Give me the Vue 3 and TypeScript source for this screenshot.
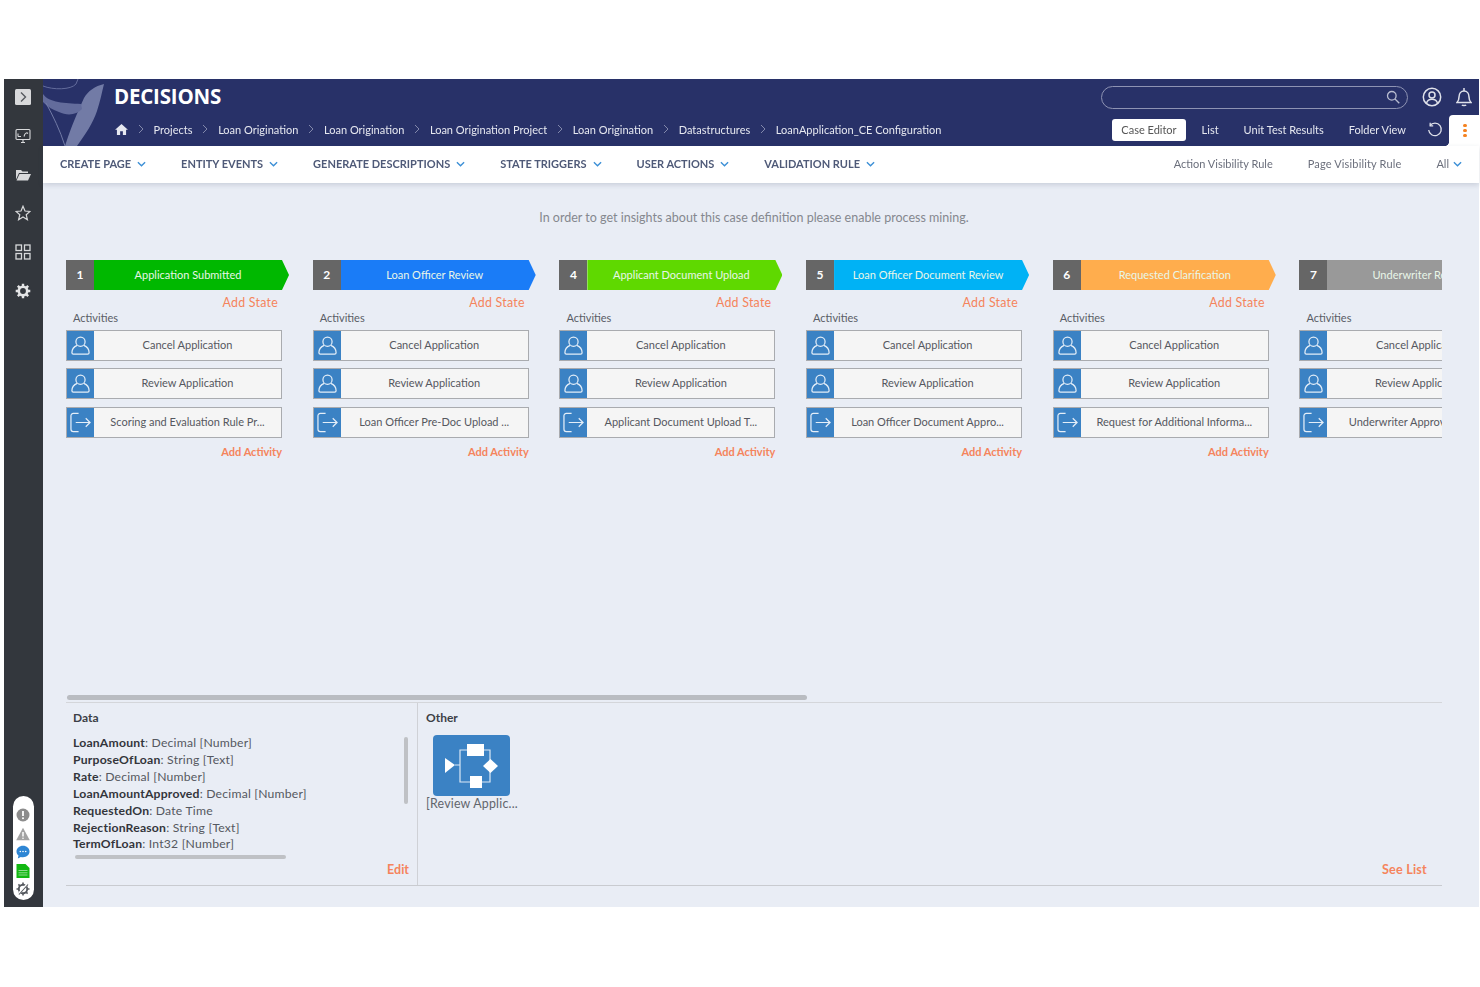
<script setup lang="ts">
type Activity = { icon: 'user' | 'exit'; label: string }
type State = { num: number; label: string; color: string; last?: boolean; activities: string[] }

const breadcrumbs = [
  'Projects',
  'Loan Origination',
  'Loan Origination',
  'Loan Origination Project',
  'Loan Origination',
  'Datastructures',
  'LoanApplication_CE Configuration'
]

const menus = ['CREATE PAGE', 'ENTITY EVENTS', 'GENERATE DESCRIPTIONS', 'STATE TRIGGERS', 'USER ACTIONS', 'VALIDATION RULE']

const states: State[] = [
  { num: 1, label: 'Application Submitted', color: '#00b800', activities: ['Cancel Application', 'Review Application', 'Scoring and Evaluation Rule Pr...'] },
  { num: 2, label: 'Loan Officer Review', color: '#1a7cf7', activities: ['Cancel Application', 'Review Application', 'Loan Officer Pre-Doc Upload ...'] },
  { num: 4, label: 'Applicant Document Upload', color: '#5fd900', activities: ['Cancel Application', 'Review Application', 'Applicant Document Upload T...'] },
  { num: 5, label: 'Loan Officer Document Review', color: '#00b2f5', activities: ['Cancel Application', 'Review Application', 'Loan Officer Document Appro...'] },
  { num: 6, label: 'Requested Clarification', color: '#ffad4d', activities: ['Cancel Application', 'Review Application', 'Request for Additional Informa...'] },
  { num: 7, label: 'Underwriter Review', color: '#999999', last: true, activities: ['Cancel Application', 'Review Application', 'Underwriter Approval Process'] }
]

const activitiesOf = (s: State): Activity[] =>
  s.activities.map((label, i) => ({ label, icon: i === 2 ? 'exit' : 'user' }))

const fields = [
  ['LoanAmount', 'Decimal [Number]'],
  ['PurposeOfLoan', 'String [Text]'],
  ['Rate', 'Decimal [Number]'],
  ['LoanAmountApproved', 'Decimal [Number]'],
  ['RequestedOn', 'Date Time'],
  ['RejectionReason', 'String [Text]'],
  ['TermOfLoan', 'Int32 [Number]']
]
</script>

<template>
  <div class="page">
    <div class="shell">
      <aside class="rail">
        <div class="rail__top">
          <svg class="rail__icon" viewBox="0 0 16 16">
            <rect width="16" height="16" rx="1.5" fill="#d8d9db" />
            <path d="M6 3.500 10.500 8 6 12.500" fill="none" stroke="#55595f" stroke-width="1.400" />
          </svg>
          <svg class="rail__icon" viewBox="0 0 16 16" fill="none" stroke="#d8d9db" stroke-width="1.100">
            <rect x="1" y="1.500" width="14" height="10" rx="1" />
            <path d="M3 8.500V5.500M3 8.500h3M9 8.500c1-4 3-4 4-3M6 14.500h4M8 11.500v3" />
          </svg>
          <svg class="rail__icon" viewBox="0 0 16 16">
            <path d="M1 3h5l1.500 1.500H13V6H4L1 12.500Z" fill="#d8d9db" />
            <path d="M4.500 7H16l-3 6.500H1.500Z" fill="#d8d9db" />
          </svg>
          <svg class="rail__icon" viewBox="0 0 16 16" fill="none" stroke="#d8d9db" stroke-width="1.200">
            <path d="M8 1.200 10 6l5 .4-3.800 3.300 1.200 5L8 12l-4.400 2.700 1.200-5L1 6.400 6 6Z" />
          </svg>
          <svg class="rail__icon" viewBox="0 0 16 16" fill="none" stroke="#d8d9db" stroke-width="1.300">
            <rect x="1" y="1" width="5.500" height="5.500" />
            <rect x="9.500" y="1" width="5.500" height="5.500" />
            <rect x="1" y="9.500" width="5.500" height="5.500" />
            <rect x="9.500" y="9.500" width="5.500" height="5.500" />
          </svg>
          <svg class="rail__icon" viewBox="0 0 16 16">
            <circle cx="8" cy="8" r="4.200" fill="none" stroke="#e4e5e6" stroke-width="2.600" />
            <path d="M8 .7v3M8 12.300v3M.7 8h3M12.300 8h3M2.800 2.800l2.100 2.100M11.100 11.100l2.100 2.100M2.800 13.200l2.100-2.100M11.100 4.900l2.100-2.100" stroke="#e4e5e6" stroke-width="2.400" />
          </svg>
        </div>
        <div class="rail__pill">
          <svg class="pill__icon" viewBox="0 0 14 14">
            <circle cx="7" cy="7" r="6.500" fill="#8c8c8c" />
            <path d="M7 3v5" stroke="#fff" stroke-width="1.800" />
            <circle cx="7" cy="10.300" r="1" fill="#fff" />
          </svg>
          <svg class="pill__icon" viewBox="0 0 14 14">
            <path d="M7 .8 13.800 13.200H.2Z" fill="#a3a3a3" />
            <path d="M7 5v4.500" stroke="#fff" stroke-width="1.500" />
            <circle cx="7" cy="11.200" r=".8" fill="#fff" />
          </svg>
          <svg class="pill__icon" viewBox="0 0 14 14">
            <path d="M7 .8c3.700 0 6.500 2.500 6.500 5.700S10.700 12.200 7 12.200c-.8 0-1.500-.1-2.200-.3L1.800 13.400l.7-2.800C1.200 9.500.5 8.100.5 6.500.5 3.300 3.300.8 7 .8Z" fill="#2e86d4" />
            <circle cx="4.300" cy="6.500" r=".8" fill="#fff" />
            <circle cx="7" cy="6.500" r=".8" fill="#fff" />
            <circle cx="9.700" cy="6.500" r=".8" fill="#fff" />
          </svg>
          <svg class="pill__icon" viewBox="0 0 14 14">
            <path d="M.5 0H9.500L13.500 4V14H.5Z" fill="#12b812" />
            <path d="M2.500 6.500h9M2.500 8.800h9M2.500 11h9" stroke="#8fdc8f" stroke-width="1" />
          </svg>
          <svg class="pill__icon" viewBox="0 0 14 14">
            <circle cx="7" cy="7" r="4.200" fill="none" stroke="#55595f" stroke-width="1.900" />
            <path d="M7 .5v2.500M7 11v2.500M.5 7H3M11 7h2.500M2.400 2.400l1.800 1.800M9.800 9.800l1.800 1.800M2.400 11.600l1.800-1.800M9.800 4.200l1.800-1.800" stroke="#55595f" stroke-width="1.600" />
            <path d="M2.500 12 11.500 2" stroke="#fff" stroke-width="2.400" />
            <path d="M3 12.500 12 2.500" stroke="#55595f" stroke-width="1.100" />
          </svg>
        </div>
      </aside>

      <div class="content">
        <header class="header">
          <svg class="header__logo" viewBox="0 0 62 67">
            <path d="M61 5C52 7 45 12 41 19 36 30 28 48 22 67H34C42 56 50 44 54 32 57 23 59 13 61 5Z" fill="#727ba6" />
            <path d="M0 15C6 24 22 24 38 25L39 30C34 36 24 37 16 33 10 31 5 28 0 23Z" fill="#636c9c" />
            <path d="M0 7C10 11 28 11 33 5L35 0" fill="none" stroke="#636c9c" stroke-width="1" />
            <path d="M3 24C10 37 17 51 22 67" fill="none" stroke="#727ba6" stroke-width="1" />
          </svg>
          <div class="header__top">
            <div class="brand">DECISIONS</div>
            <div class="search">
              <svg class="search__icon" viewBox="0 0 14 14" fill="none" stroke="#b8bcd0" stroke-width="1.300">
                <circle cx="5.800" cy="5.800" r="4.300" />
                <path d="M9 9l4.300 4.300" />
              </svg>
            </div>
            <svg class="header__user" viewBox="0 0 20 20" fill="none" stroke="#dfe1ea" stroke-width="1.500">
              <circle cx="10" cy="10" r="8.700" />
              <circle cx="10" cy="8" r="3" />
              <path d="M4.500 16c1-3 3-3.800 5.500-3.800s4.500.8 5.500 3.800" />
            </svg>
            <svg class="header__bell" viewBox="0 0 16 20" fill="none" stroke="#dfe1ea" stroke-width="1.500">
              <path d="M1 15.500c1.500-1.500 2-2.500 2-5.500 0-3.500 2-6 5-6s5 2.500 5 6c0 3 .5 4 2 5.500Z" />
              <path d="M8 1v3M6 17.800c.5 1 3.500 1 4 0" />
            </svg>
          </div>
          <div class="header__nav">
            <nav class="crumbs">
              <svg class="crumbs__home" viewBox="0 0 14 12">
                <path d="M7 0 14 6.200H12V12H8.500V8H5.500V12H2V6.200H0Z" fill="#e6e8f0" />
              </svg>
              <template v-for="(c, i) in breadcrumbs" :key="i">
                <svg class="crumbs__sep" viewBox="0 0 6 10" fill="none" stroke="#8288ab" stroke-width="1">
                  <path d="M1 1l4 4-4 4" />
                </svg>
                <span class="crumbs__item">{{ c }}</span>
              </template>
            </nav>
            <div class="tabs">
              <span class="tab tab--active">Case Editor</span>
              <span class="tab">List</span>
              <span class="tab">Unit Test Results</span>
              <span class="tab">Folder View</span>
              <svg class="tabs__refresh" viewBox="0 0 16 16" fill="none" stroke="#dfe1ea" stroke-width="1.300">
                <path d="M3 3.500A6.300 6.300 0 1 1 1.700 8" />
                <path d="M3.200 .8v3h3" />
              </svg>
            </div>
            <div class="kebab">
              <i /><i /><i />
            </div>
          </div>
        </header>

        <div class="toolbar">
          <div class="toolbar__menus">
            <span v-for="m in menus" :key="m" class="menu">
              {{ m }}
              <svg class="chev" viewBox="0 0 10 6" fill="none" stroke="#3b8fd6" stroke-width="1.500">
                <path d="M1 1l4 4 4-4" />
              </svg>
            </span>
          </div>
          <div class="toolbar__rules">
            <span>Action Visibility Rule</span>
            <span class="rule-page">Page Visibility Rule</span>
            <span class="rule-all">
              All
              <svg class="chev" viewBox="0 0 10 6" fill="none" stroke="#3b8fd6" stroke-width="1.500">
                <path d="M1 1l4 4 4-4" />
              </svg>
            </span>
          </div>
        </div>

        <main class="main">
          <p class="notice">In order to get insights about this case definition please enable process mining.</p>

          <section class="board">
            <div v-for="s in states" :key="s.num" class="state">
              <div class="state__head">
                <span class="state__num">{{ s.num }}</span>
                <span class="state__label" :class="{ 'state__label--last': s.last }" :style="{ background: s.color }">
                  <span class="state__text">{{ s.label }}</span>
                </span>
              </div>
              <a class="link state__add">Add State</a>
              <div class="state__caption">Activities</div>
              <div class="activities">
                <div v-for="a in activitiesOf(s)" :key="a.label" class="activity">
                  <span class="activity__icon">
                    <svg v-if="a.icon === 'user'" viewBox="0 0 22 22" fill="none" stroke="#e4eef8" stroke-width="1.300">
                      <circle cx="11" cy="7" r="4.800" />
                      <path d="M7.500 10.800C4.500 12 2 14 2 18.500c0 1 .5 1.500 1.500 1.500h15c1 0 1.500-.5 1.500-1.500 0-4.500-2.500-6.500-5.500-7.700" />
                    </svg>
                    <svg v-else viewBox="0 0 22 22" fill="none" stroke="#e4eef8" stroke-width="1.300">
                      <path d="M9 1.500H3.500C2 1.500 1 2.500 1 4v14c0 1.500 1 2.500 2.500 2.500H9" />
                      <path d="M6 11h15M16.500 6.500 21 11l-4.500 4.500" />
                    </svg>
                  </span>
                  <span class="activity__label">{{ a.label }}</span>
                </div>
              </div>
              <a class="link link--bold activity__add">Add Activity</a>
            </div>
          </section>

          <div class="hscroll"><div class="hscroll__thumb" /></div>

          <section class="details">
            <div class="data">
              <h4 class="details__title">Data</h4>
              <ul class="fields">
                <li v-for="f in fields" :key="f[0]"><b>{{ f[0] }}</b>: {{ f[1] }}</li>
              </ul>
              <div class="data__vscroll" />
              <div class="data__hscroll" />
              <a class="link link--bold data__edit">Edit</a>
            </div>
            <div class="other">
              <h4 class="details__title">Other</h4>
              <div class="tile">
                <svg viewBox="0 0 77 61" fill="none">
                  <path d="M22 30H27V15H57V31M27 30V47H57V31" stroke="#dbe8f5" stroke-width="1.200" />
                  <path d="M12 23 22 30 12 38Z" fill="#fff" />
                  <rect x="34" y="9" width="17" height="12" fill="#fff" />
                  <rect x="37" y="41" width="12" height="12" fill="#fff" />
                  <path d="M57.500 24 65 31 57.500 38 50 31Z" fill="#fff" />
                </svg>
              </div>
              <div class="tile__label">[Review Applic...</div>
              <a class="link link--bold other__list">See List</a>
            </div>
          </section>
        </main>
      </div>
    </div>
  </div>
</template>

<style>
body {
  margin: 0;
  background: #fff;
}
</style>

<style scoped>
.page {
  height: 987px;
  box-sizing: border-box;
  padding: 79px 1px 80px 4px;
  font-family: Lato, "Liberation Sans", sans-serif;
  font-size: 11px;
  color: #4a4d55;
  overflow: hidden;
}

/* the reference is a slightly soft capture */
.shell {
  display: flex;
  height: 100%;
  filter: blur(0.45px);
}

.rail {
  flex: 0 0 39px;
  background: #33373d;
  display: flex;
  flex-direction: column;
  align-items: center;
  justify-content: space-between;
  padding: 10px 1px 7px 0;
  box-sizing: border-box;
}

.rail__top {
  display: flex;
  flex-direction: column;
  align-items: center;
  gap: 22.8px;
}

.rail__icon {
  width: 16px;
  height: 16px;
  display: block;
}

.rail__pill {
  width: 21px;
  height: 104px;
  background: #fff;
  border-radius: 11px;
  display: flex;
  flex-direction: column;
  align-items: center;
  justify-content: flex-end;
  gap: 4.5px;
  padding-bottom: 4px;
  box-sizing: border-box;
}

.pill__icon {
  width: 14px;
  height: 14px;
}

.content {
  flex: 1;
  min-width: 0;
  display: flex;
  flex-direction: column;
}

.header {
  position: relative;
  height: 67px;
  flex: none;
  background: #283168;
  color: #e6e8f0;
}

.header__logo {
  position: absolute;
  left: 0;
  top: 0;
  width: 62px;
  height: 67px;
}

.header__top {
  display: flex;
  align-items: center;
  height: 36px;
  padding: 0 7px 0 71px;
}

.brand {
  flex: 1;
  font-family: "Open Sans", sans-serif;
  font-size: 20.5px;
  font-weight: 700;
  color: #fff;
  letter-spacing: -0.2px;
  margin-top: -2px;
}

.search {
  width: 307px;
  height: 23px;
  box-sizing: border-box;
  border: 1px solid #8e93b3;
  border-radius: 12px;
  display: flex;
  align-items: center;
  justify-content: flex-end;
  padding-right: 7px;
}

.search__icon {
  width: 14px;
  height: 14px;
}

.header__user {
  width: 20px;
  height: 20px;
  margin-left: 14px;
}

.header__bell {
  width: 16px;
  height: 20px;
  margin-left: 14px;
}

.header__nav {
  display: flex;
  align-items: flex-end;
  height: 31px;
}

.crumbs {
  flex: 1;
  display: flex;
  align-items: center;
  height: 30px;
  margin-bottom: 2px;
  padding-left: 72px;
  white-space: nowrap;
}

.crumbs__home {
  width: 13px;
  height: 11px;
}

.crumbs__sep {
  width: 6px;
  height: 10px;
  margin: 0 9.8px;
}

.crumbs__item {
  font-size: 11px;
}

.tabs {
  display: flex;
  align-items: center;
  height: 31px;
  padding-bottom: 1px;
  box-sizing: border-box;
}

.tab {
  padding: 0 9px;
  margin-left: 7px;
  height: 22px;
  line-height: 21px;
  border-radius: 3px;
  color: #e6e8f0;
  white-space: nowrap;
}

.tab--active {
  background: #fff;
  color: #555;
}

.tabs__refresh {
  width: 16px;
  height: 16px;
  margin: 0 6px 0 12px;
}

.kebab {
  position: relative;
  width: 30px;
  height: 31px;
  background: #fff;
  border-top-left-radius: 4px;
  display: flex;
  flex-direction: column;
  align-items: center;
  justify-content: center;
  gap: 1.5px;
}

.kebab::before {
  content: "";
  position: absolute;
  left: -4px;
  bottom: 0;
  width: 4px;
  height: 4px;
  background: radial-gradient(circle at 0 0, #283168 3.6px, #fff 4.2px);
}

.kebab i {
  width: 3.5px;
  height: 3.5px;
  border-radius: 50%;
  background: #f58220;
  display: block;
  position: relative;
  left: 1px;
}

.toolbar {
  position: relative;
  z-index: 1;
  height: 37px;
  flex: none;
  background: #fff;
  box-shadow: 0 2px 5px rgba(60, 70, 100, 0.18);
  display: flex;
  align-items: center;
  justify-content: space-between;
  padding: 0 17px 2px;
  box-sizing: border-box;
  white-space: nowrap;
}

.toolbar__menus {
  display: flex;
  gap: 35px;
}

.menu {
  display: inline-flex;
  align-items: center;
  gap: 6px;
  font-weight: 700;
  color: #4f5a78;
  font-size: 11px;
}

.chev {
  width: 9px;
  height: 6px;
}

.toolbar__rules {
  display: flex;
  gap: 35px;
  color: #6b6f7c;
}

.rule-page {
  letter-spacing: 0.15px;
}

.rule-all {
  display: inline-flex;
  align-items: center;
  gap: 4px;
}

.main {
  flex: 1;
  min-height: 0;
  background: #e9edf5;
  padding: 0 37px 21px 23px;
  display: flex;
  flex-direction: column;
}

.notice {
  margin: 27px 0 34px;
  line-height: 16px;
  text-align: center;
  color: #85888f;
  font-size: 12.5px;
}

.board {
  flex: 1;
  min-height: 0;
  display: flex;
  gap: 30.7px;
  overflow: hidden;
}

.state {
  flex: 0 0 216px;
  min-width: 0;
}

.state__head {
  display: flex;
  height: 30px;
  width: 223px;
}

.state__num {
  flex: 0 0 28px;
  background: #666;
  color: #fff;
  font-weight: 700;
  font-size: 12px;
  display: flex;
  align-items: center;
  justify-content: center;
  padding-bottom: 1px;
  box-sizing: border-box;
}

.state__label {
  flex: 1;
  clip-path: polygon(0 0, calc(100% - 7px) 0, 100% 50%, calc(100% - 7px) 100%, 0 100%);
  display: flex;
  align-items: center;
  justify-content: center;
  color: #e8f6e8;
  padding: 0 7px 1px 0;
  white-space: nowrap;
}

.state__label--last {
  clip-path: none;
  justify-content: flex-start;
  padding-left: 45px;
  padding-right: 0;
  overflow: hidden;
}

.link {
  display: block;
  text-align: right;
  color: #f5845c;
}

.link--bold {
  font-weight: 700;
}

.state__add {
  font-size: 12.4px;
  letter-spacing: 0.25px;
  line-height: 15px;
  margin: 5px 4px 0 0;
}

.state__caption {
  margin: 0 0 0 7px;
  line-height: 16px;
  color: #5a5d66;
}

.activities {
  display: flex;
  flex-direction: column;
  gap: 7.4px;
  margin-top: 4px;
}

.activity {
  display: flex;
  height: 31px;
  box-sizing: border-box;
  border: 1px solid #a9abaf;
  background: #f5f5f5;
}

.activity__icon {
  flex: 0 0 27px;
  background: #3b82c4;
  display: flex;
  align-items: center;
  justify-content: center;
}

.activity__icon svg {
  width: 21px;
  height: 21px;
}

.activity__label {
  flex: 1;
  text-align: center;
  line-height: 28px;
  white-space: nowrap;
  overflow: hidden;
  color: #55585f;
}

.activity__add {
  margin-top: 6px;
  line-height: 15px;
}

.hscroll {
  height: 5px;
  margin: 0 0 2px 1px;
  flex: none;
}

.hscroll__thumb {
  width: 740px;
  height: 5px;
  border-radius: 3px;
  background: #b9bcc1;
}

.details {
  flex: 0 0 184px;
  display: flex;
  border-top: 1px solid #d4d6da;
  border-bottom: 1px solid #c9cbd0;
  box-sizing: border-box;
}

.data {
  position: relative;
  flex: 0 0 352px;
  box-sizing: border-box;
  border-right: 1px solid #cfd1d6;
  padding: 7px 0 0 7px;
}

.details__title {
  margin: 0;
  font-size: 12px;
  line-height: 16px;
  font-weight: 700;
  color: #3c3f46;
}

.fields {
  list-style: none;
  margin: 9px 0 0;
  padding: 0;
  font-size: 12.2px;
  letter-spacing: 0.2px;
  line-height: 16.9px;
  color: #555860;
}

.fields b {
  color: #33353b;
}

.data__vscroll {
  position: absolute;
  left: 338px;
  top: 34px;
  width: 4px;
  height: 67px;
  border-radius: 2px;
  background: #bfc1c5;
}

.data__hscroll {
  margin: 2px 0 0 2px;
  width: 211px;
  height: 4px;
  border-radius: 2px;
  background: #bfc1c5;
}

.data__edit {
  position: absolute;
  right: 8px;
  bottom: 8px;
  font-size: 12.5px;
}

.other {
  position: relative;
  flex: 1;
  padding: 7px 0 0 8px;
}

.tile {
  width: 77px;
  height: 61px;
  margin: 9px 0 0 7px;
  border-radius: 4px;
  background: #3b82c4;
}

.tile svg {
  width: 77px;
  height: 61px;
  display: block;
}

.tile__label {
  font-size: 12.4px;
  letter-spacing: 0.2px;
  line-height: 16px;
  color: #62656c;
}

.other__list {
  position: absolute;
  right: 15px;
  bottom: 8px;
  font-size: 12.6px;
  letter-spacing: 0.2px;
}
</style>
